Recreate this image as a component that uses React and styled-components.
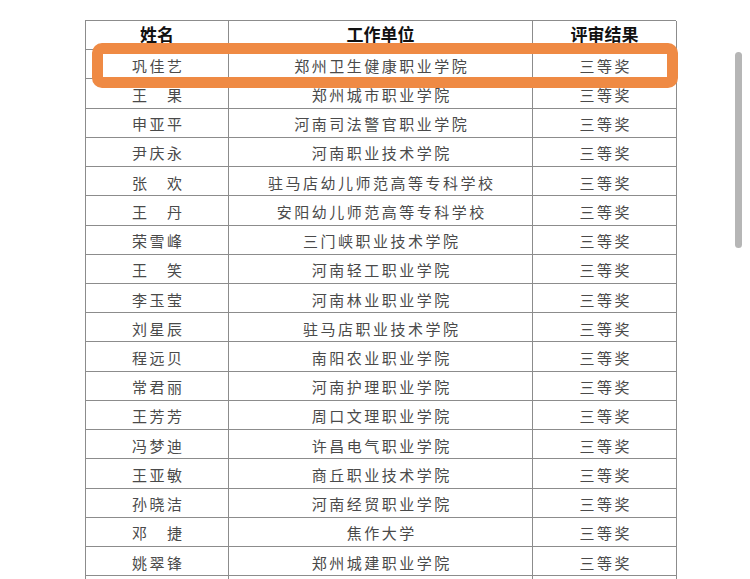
import React from 'react'
import styled, { createGlobalStyle } from 'styled-components'

const GlobalStyle = createGlobalStyle`
  html, body {
    margin: 0;
    padding: 0;
    background: #fff;
    height: 579px;
    overflow: hidden;
  }
  body {
    font-family: "Noto Sans CJK SC", "Noto Sans", sans-serif;
  }
`

const rows = [
    ['巩佳艺', '郑州卫生健康职业学院'],
    ['王　果', '郑州城市职业学院'],
    ['申亚平', '河南司法警官职业学院'],
    ['尹庆永', '河南职业技术学院'],
    ['张　欢', '驻马店幼儿师范高等专科学校'],
    ['王　丹', '安阳幼儿师范高等专科学校'],
    ['荣雪峰', '三门峡职业技术学院'],
    ['王　笑', '河南轻工职业学院'],
    ['李玉莹', '河南林业职业学院'],
    ['刘星辰', '驻马店职业技术学院'],
    ['程远贝', '南阳农业职业学院'],
    ['常君丽', '河南护理职业学院'],
    ['王芳芳', '周口文理职业学院'],
    ['冯梦迪', '许昌电气职业学院'],
    ['王亚敏', '商丘职业技术学院'],
    ['孙晓洁', '河南经贸职业学院'],
    ['邓　捷', '焦作大学'],
    ['姚翠锋', '郑州城建职业学院'],
    ['', ''],
]

const App = () => {
    return (
        <Page>
            <GlobalStyle />
            <Sheet>
                <Grid>
                    <HeadCell>姓名</HeadCell>
                    <HeadCell>工作单位</HeadCell>
                    <HeadCell>评审结果</HeadCell>
                    {rows.map(([name, unit], i) => (
                        <React.Fragment key={i}>
                            <Cell>{name}</Cell>
                            <Cell>{unit}</Cell>
                            <Cell>{name ? '三等奖' : ''}</Cell>
                        </React.Fragment>
                    ))}
                </Grid>
                {/* orange highlight over the first row */}
                <Highlight />
            </Sheet>
            <ScrollThumb />
        </Page>
    )
}

const Page = styled.div`
  position: relative;
  height: 579px;
  padding: 20px 0 0 85px;
  box-sizing: border-box;
  overflow: hidden;
`

const Sheet = styled.div`
  position: relative;
  width: 591px;
`

const Grid = styled.div`
  display: grid;
  grid-template-columns: 143px 304px 144px;
  grid-auto-rows: 29.22px;
  border-top: 1px solid #8c8c8c;
  border-left: 1px solid #8c8c8c;
`

const Cell = styled.div`
  box-sizing: border-box;
  display: flex;
  align-items: center;
  justify-content: center;
  padding: 2px 0 0 2.5px;
  border-right: 1px solid #8c8c8c;
  border-bottom: 1px solid #8c8c8c;
  font-size: 15px;
  letter-spacing: 2.5px;
  color: #4a4a4a;
  white-space: nowrap;
`

const HeadCell = styled(Cell)`
  padding: 0 0 4px 0;
  font-size: 17px;
  font-weight: 700;
  letter-spacing: 0;
  color: #111;
`

const Highlight = styled.div`
  position: absolute;
  left: 7px;
  top: 23px;
  width: 586px;
  height: 45px;
  box-sizing: border-box;
  border: 11px solid #ef8a44;
  border-radius: 10px;
  pointer-events: none;
`

const ScrollThumb = styled.div`
  position: absolute;
  left: 735px;
  top: 52px;
  width: 7px;
  height: 196px;
  border-radius: 4px;
  background: #b6b6b6;
`

export default App
